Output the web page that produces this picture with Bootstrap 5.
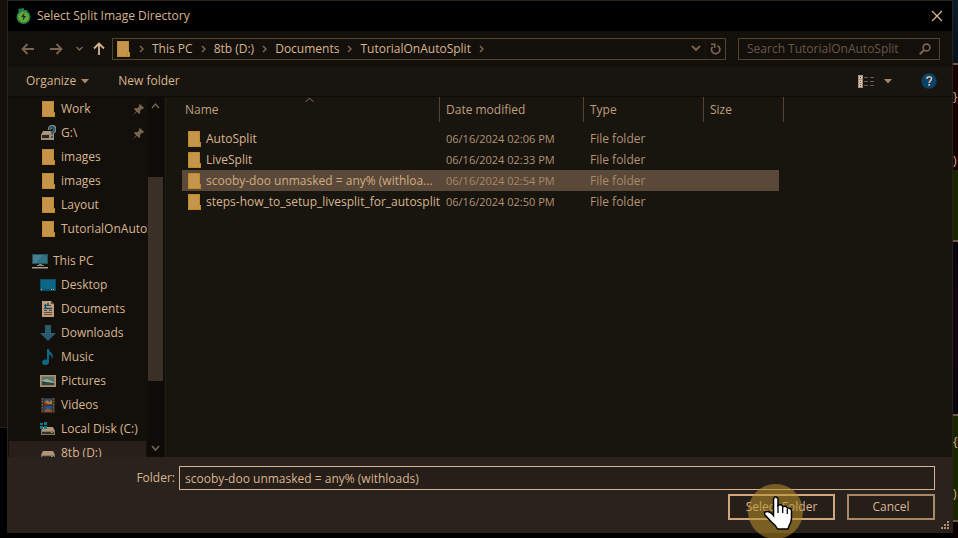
<!DOCTYPE html>
<html lang="en">
<head>
<meta charset="utf-8">
<meta name="viewport" content="width=device-width, initial-scale=1">
<title>Select Split Image Directory</title>
<link href="https://cdn.jsdelivr.net/npm/bootstrap@5.3.0/dist/css/bootstrap.min.css" rel="stylesheet">
<style>
:root { --ink:#d9b48e; --dim:#7b6450; --line:#54432f; }
body { font:12px/16px "Open Sans","Noto Sans",sans-serif; color:var(--ink); background:#000; height:100vh; }
a, a:hover { color:inherit; text-decoration:none; }
svg { display:block; flex:none; }
.bare { background:none; border:0; padding:0; color:inherit; font:inherit; }
.desk-left { width:7px; }
.desk-left div:first-child { flex:427; background:#14110c; border-bottom:1px solid #2a2019; }
.desk-left div:last-child { flex:110; }
.desk-right { width:5px; }
.desk-right div { overflow:hidden; border-bottom:2px solid #6b5a48; }
.dialog { min-width:0; border:1px solid #2b221b; margin-bottom:5px; background:#13100c; }
.titlebar { height:30px; background:#000; padding:0 9px 0 8px; gap:6px; }
.navrow { height:35px; padding:0 12px 0 13px; }
.recent { margin-left:13px; }
.up { margin-left:10px; }
.field { height:22px; border:1px solid var(--line); background:#13100c; }
.location { margin:0 12px 0 7px; }
.search { width:202px; }
.search input { background:none; border:0; outline:0; color:var(--ink); font:inherit; padding:0; min-width:0; }
.search input::placeholder { color:#6a5644; opacity:1; }
.refresh { border-left:1px solid #1e1813; width:20px; height:20px; }
.crumb { margin:0 8px; }
.toolrow { height:31px; background:#18140f; border-bottom:1px solid #0e0b08; padding:0 15px 0 18px; }
.side { width:140px; overflow:hidden; }
.side a { height:24px; flex:none; padding-left:32px; gap:4px; white-space:nowrap; }
.side a.top { padding-left:24px; margin-top:8px; }
.side a.current { background:#281f1a; margin-right:2px; margin-left:1px; padding-left:31px; }
.side .icon-box { width:17px; flex:none; }
.side .fold { padding-left:2px; }
.side .pin { margin-left:auto; margin-right:3px; }
.scroll { width:16px; background:#0e0b09; padding-right:1px; }
.thumb { background:#3a3027; flex:208; }
.files { background:#18150f; border-left:1px solid #221c16; margin-left:1px; padding-left:16px; }
.files table { width:602px; table-layout:fixed; border-collapse:separate; border-spacing:0; }
.files th { height:25px; font-weight:400; padding:0 6px; border-right:1px solid var(--line); color:#bf9d7c; position:relative; }
.files th:first-child { padding-left:3px; }
.files th svg { position:absolute; left:50%; top:0; margin-left:-6px; }
.files td { height:21px; padding:0 6px; white-space:nowrap; color:#b39273; }
.files td:first-child { padding-right:0; color:var(--ink); }
.files td:last-child { border-right:5px solid transparent; background-clip:padding-box; }
.files .stamp { font-size:11px; }
.files .spacer td { height:6px; }
.files .picked td { background-color:#5a4938; color:#a98769; }
.files .picked td:first-child { color:#d0ab84; }
.footer-pane { height:75px; background:#2a221d; padding:9px 17px 0 20px; }
.footer-pane input { height:24px; border:1px solid var(--ink); background:#251e19; color:var(--ink); font:inherit; padding:0 5px; outline:0; min-width:0; }
.footer-pane label { width:147px; }
.choice { height:26px; border:2px solid #a98769; background:#251e19; color:var(--ink); font:inherit; padding:0; }
.choice.wide { width:107px; border-color:#d0a67e; }
.choice.narrow { width:88px; }
.halo { position:absolute; left:20px; top:-10px; width:55px; height:55px; border-radius:50%; background:rgba(190,148,45,.54); pointer-events:none; }
.hand { position:absolute; left:35px; top:2px; pointer-events:none; }
.grip { position:absolute; right:3px; bottom:3px; }
</style>
<script src="https://cdn.jsdelivr.net/npm/bootstrap@5.3.0/dist/js/bootstrap.bundle.min.js"></script>
</head>
<body class="d-flex overflow-hidden">
<svg width="0" height="0" class="position-absolute" aria-hidden="true">
  <defs>
    <symbol id="folder" viewBox="0 0 14 16"><path d="M0 0h12v11h1v5H0z" fill="#c08a28"/><path d="M1 1h10v10l-1 1v3H1z" fill="#c5954e"/><path d="M11 12h1v3h-1z" fill="#d5a04a"/></symbol>
    <symbol id="sep" viewBox="0 0 5 8"><path d="M1 1l3 3-3 3" fill="none" stroke="#7b6450" stroke-width="1.5"/></symbol>
    <symbol id="pin" viewBox="0 0 12 12"><path d="M7 1l4 4-1 1-1-.3-2 2 .2 2.300L6 11 3.800 8.800.8 11.500.5 11.200 3.200 8.200 1 6l1-1 2.300.2 2-2L6 2z" fill="#7b6450"/></symbol>
    <symbol id="drive" viewBox="0 0 16 16"><path d="M3 6h10l2 4H1z" fill="#b09478"/><path d="M1 10h14v4H1z" fill="#8d7763"/><path d="M2 11h12v2H2z" fill="#3a332b"/><path d="M11 11h2v1h-2z" fill="#5fa06a"/></symbol>
  </defs>
</svg>

<div class="desk-left d-flex flex-column"><div></div><div></div></div>

<main class="dialog d-flex flex-column flex-fill position-relative">
  <header class="titlebar d-flex align-items-center flex-shrink-0">
    <svg width="15" height="16" viewBox="0 0 15 16"><path d="M2 1l6-1v2h3l1 2H3z" fill="#1f7f48"/><circle cx="7.500" cy="9" r="6.200" fill="#6aa63a" stroke="#1f7f48" stroke-width="1.500"/><path d="M8.500 4.500L5 9h2.300L6.500 13l3.700-5H8z" fill="#0c3a22"/></svg>
    <span>Select Split Image Directory</span>
    <button class="bare ms-auto" aria-label="Close"><svg width="12" height="12" viewBox="0 0 12 12"><path d="M1 1l10 10M11 1L1 11" stroke="#e0bb95" stroke-width="1.200"/></svg></button>
  </header>

  <nav class="navrow d-flex align-items-center flex-shrink-0" aria-label="Location">
    <button class="bare" aria-label="Back"><svg width="13" height="12" viewBox="0 0 13 12"><path d="M13 6H1.500M6.500 1l-5 5 5 5" fill="none" stroke="#7b6450" stroke-width="1.800"/></svg></button>
    <button class="bare ms-3" aria-label="Forward"><svg width="13" height="12" viewBox="0 0 13 12"><path d="M0 6h11.500M6.500 1l5 5-5 5" fill="none" stroke="#7b6450" stroke-width="1.800"/></svg></button>
    <button class="bare recent" aria-label="Recent locations"><svg width="7" height="6" viewBox="0 0 7 6"><path d="M.5 1l3 3 3-3" fill="none" stroke="#7b6450" stroke-width="1.500"/></svg></button>
    <button class="bare up" aria-label="Up"><svg width="12" height="13" viewBox="0 0 12 13"><path d="M6 13V1.500M1 6.500l5-5 5 5" fill="none" stroke="#d9b48e" stroke-width="1.800"/></svg></button>
    <div class="field location flex-fill d-flex align-items-center ps-1">
      <svg width="14" height="16"><use href="#folder"/></svg>
      <svg class="crumb" width="5" height="8"><use href="#sep"/></svg>
      <a href="#">This PC</a><svg class="crumb" width="5" height="8"><use href="#sep"/></svg>
      <a href="#">8tb (D:)</a><svg class="crumb" width="5" height="8"><use href="#sep"/></svg>
      <a href="#">Documents</a><svg class="crumb" width="5" height="8"><use href="#sep"/></svg>
      <a href="#">TutorialOnAutoSplit</a><svg class="crumb" width="5" height="8"><use href="#sep"/></svg>
      <button class="bare ms-auto" aria-label="Previous locations"><svg width="10" height="7" viewBox="0 0 10 7"><path d="M1 1l4 4 4-4" fill="none" stroke="#7b6450" stroke-width="1.800"/></svg></button>
      <button class="bare refresh d-flex align-items-center justify-content-center ms-1" aria-label="Refresh"><svg width="11" height="12" viewBox="0 0 11 12"><path d="M7.500 2.700A4.200 4.200 0 1 1 2.500 3.700" fill="none" stroke="#7b6450" stroke-width="1.700"/><path d="M1 1.300h3.700V5" fill="none" stroke="#7b6450" stroke-width="1.600"/></svg></button>
    </div>
    <div class="field search d-flex align-items-center ps-2 pe-2">
      <input class="flex-fill" type="text" aria-label="Search" placeholder="Search TutorialOnAutoSplit">
      <svg width="12" height="12" viewBox="0 0 12 12"><circle cx="7.500" cy="4.500" r="3.400" fill="none" stroke="#7b6450" stroke-width="1.600"/><path d="M5 7L.8 11.200" stroke="#7b6450" stroke-width="2"/></svg>
    </div>
  </nav>

  <div class="toolrow d-flex align-items-center flex-shrink-0">
    <button class="bare d-flex align-items-center">Organize <svg class="ms-1" width="10" height="5" viewBox="0 0 10 5"><path d="M1 0h8L5 4.500z" fill="#a98769"/></svg></button>
    <button class="bare ms-4 ps-1">New folder</button>
    <button class="bare ms-auto d-flex align-items-center gap-2" aria-label="Change view">
      <svg width="17" height="13" viewBox="0 0 17 13"><path d="M0 0h5v13H0z" fill="#a98f76"/><path d="M1 1h3v3H1zM1 5h3v3H1zM1 9h3v3H1z" fill="#d9c4ac"/><path d="M2 2h1v1H2z" fill="#333"/><path d="M2 6h1v1H2z" fill="#0a6a98"/><path d="M2 10h1v1H2z" fill="#a02018"/><path d="M6 2.500h4m2 0h4M6 6.500h4m2 0h4M6 10.500h4m2 0h4" stroke="#6e5a48"/></svg>
      <svg width="10" height="5" viewBox="0 0 10 5"><path d="M1 0h8L5 4.500z" fill="#a98769"/></svg>
    </button>
    <button class="bare ms-4 ps-1" aria-label="Help"><svg width="16" height="16" viewBox="0 0 16 16"><circle cx="8" cy="8" r="7.700" fill="#06436a"/><path d="M5.800 6c0-3 4.700-3 4.700-.2C10.500 7.600 8.200 7.600 8.200 10" fill="none" stroke="#e0bb95" stroke-width="1.600"/><path d="M7.300 11h1.800v1.800H7.300z" fill="#e0bb95"/></svg></button>
  </div>

  <div class="d-flex flex-fill overflow-hidden">
    <nav class="side d-flex flex-column flex-shrink-0" aria-label="Folders">
      <a href="#" class="d-flex align-items-center"><span class="icon-box fold"><svg width="14" height="16"><use href="#folder"/></svg></span>Work<svg class="pin" width="12" height="12"><use href="#pin"/></svg></a>
      <a href="#" class="d-flex align-items-center"><span class="icon-box"><svg width="16" height="16" viewBox="0 0 16 16"><path d="M3 6h8v4H1z" fill="#b09478"/><path d="M1 9h13v6H1z" fill="#a08a74"/><path d="M2 10h7v3H2z" fill="#2d2721"/><path d="M9.500 5c0-4.500 5.500-4.500 5.500-.5 0 2.500-3 2-3 5m0 1.500v3" fill="none" stroke="#b09478" stroke-width="3.200"/><path d="M9.500 5c0-4.500 5-4 5-.5 0 2.500-2.500 2-2.500 5m0 1.500v2" fill="none" stroke="#135a80" stroke-width="1.800"/></svg></span>G:\<svg class="pin" width="12" height="12"><use href="#pin"/></svg></a>
      <a href="#" class="d-flex align-items-center"><span class="icon-box fold"><svg width="14" height="16"><use href="#folder"/></svg></span>images</a>
      <a href="#" class="d-flex align-items-center"><span class="icon-box fold"><svg width="14" height="16"><use href="#folder"/></svg></span>images</a>
      <a href="#" class="d-flex align-items-center"><span class="icon-box fold"><svg width="14" height="16"><use href="#folder"/></svg></span>Layout</a>
      <a href="#" class="d-flex align-items-center"><span class="icon-box fold"><svg width="14" height="16"><use href="#folder"/></svg></span>TutorialOnAutoSplit</a>
      <a href="#" class="top d-flex align-items-center"><span class="icon-box"><svg width="17" height="16" viewBox="0 0 17 16"><path d="M0 1h16v10H0z" fill="#24505c"/><path d="M1 2h14v8H1z" fill="#2f7284"/><path d="M1 2h10L4 10H1z" fill="#47808c"/><path d="M7 11h3v1h2v1H5v-1h2z" fill="#8d8273"/><path d="M0 14h16v1.500H0z" fill="#a89a88"/></svg></span>This PC</a>
      <a href="#" class="d-flex align-items-center"><span class="icon-box"><svg width="16" height="12" viewBox="0 0 16 12"><path d="M0 0h16v12H0z" fill="#0c4f6b"/><path d="M1 1h14v9H1z" fill="#0d6886"/><path d="M1 10h1v1H1zM11 10h1v1h-1zM13 10h1v1h-1z" fill="#c8b090"/></svg></span>Desktop</a>
      <a href="#" class="d-flex align-items-center"><span class="icon-box"><svg width="16" height="16" viewBox="0 0 16 16"><path d="M2 0h9l3 3v13H2z" fill="#c09c7a"/><path d="M11 0v3h3z" fill="#5a4938"/><path d="M4 4.500h7M4 9.500h3M9 9.500h3M4 11.500h8M4 13.500h8" stroke="#5f4e3e"/><path d="M4 7.500h8M5.500 3v5M8 2v3" stroke="#0b4f74" stroke-width="1.500"/></svg></span>Documents</a>
      <a href="#" class="d-flex align-items-center"><span class="icon-box"><svg width="16" height="16" viewBox="0 0 16 16"><path d="M5 0h6v8h5l-8 8-8-8h5z" fill="#285a72"/></svg></span>Downloads</a>
      <a href="#" class="d-flex align-items-center"><span class="icon-box"><svg width="16" height="16" viewBox="0 0 16 16"><path d="M7 0h2c0 3 4 4 3.800 7.500-.1 1.800-1 2.500-1.300 2.500.8-2.500-.5-3.800-2.500-4.500V13c0 4-7 4-7 .5 0-2.500 3-3.500 5-2.500z" fill="#0d6886"/></svg></span>Music</a>
      <a href="#" class="d-flex align-items-center"><span class="icon-box"><svg width="16" height="12" viewBox="0 0 16 12"><path d="M0 0h16v12H0z" fill="#b98f6b"/><path d="M1.500 1.500h13v9h-13z" fill="#4f7672"/><path d="M2 5l5-1 7 3v1H2z" fill="#a6a68c"/><path d="M2 6l4 1 8 1v2H2z" fill="#27483d"/></svg></span>Pictures</a>
      <a href="#" class="d-flex align-items-center"><span class="icon-box"><svg width="16" height="15" viewBox="0 0 16 15"><path d="M1 0h14v15H1z" fill="#3a2e25"/><path d="M2.500 0v15M13.500 0v15" stroke="#7b6450" stroke-dasharray="1.500 1.500"/><path d="M4 1h8v6H4zM4 8h8v6H4z" fill="#27507a"/><path d="M5 4l2-2 2 2 3-2v4H5z" fill="#b0782c"/><path d="M4 5h3v2H4z" fill="#8e2c20"/><path d="M5 12l3-2 4 3v1H5z" fill="#93502c"/></svg></span>Videos</a>
      <a href="#" class="d-flex align-items-center"><span class="icon-box"><svg width="16" height="16" viewBox="0 0 16 16"><use href="#drive"/><path d="M0 2h3v2H0zM4 1h3v3H4zM0 5h3v3H0zM4 5h3v3H4z" fill="#087c8a"/></svg></span>Local Disk (C:)</a>
      <a href="#" class="current d-flex align-items-center" aria-current="true"><span class="icon-box"><svg width="16" height="16"><use href="#drive"/></svg></span>8tb (D:)</a>
    </nav>
    <div class="scroll d-flex flex-column align-items-stretch flex-shrink-0">
      <div style="flex:78" class="pt-1 d-flex justify-content-center"><svg width="9" height="9" viewBox="0 0 9 9"><path d="M1 7l3.500-4L8 7" fill="none" stroke="#7b6450" stroke-width="1.300"/></svg></div>
      <div class="thumb"></div>
      <div style="flex:74" class="pb-1 d-flex justify-content-center align-items-end"><svg width="9" height="9" viewBox="0 0 9 9"><path d="M1 2l3.500 4L8 2" fill="none" stroke="#7b6450" stroke-width="1.500"/></svg></div>
    </div>
    <section class="files flex-fill">
      <table>
        <colgroup><col style="width:258px"><col style="width:144px"><col style="width:120px"><col style="width:80px"></colgroup>
        <thead><tr><th scope="col">Name<svg width="9" height="6" viewBox="0 0 9 6"><path d="M.5 5l4-4 4 4" fill="none" stroke="#8d7259"/></svg></th><th scope="col">Date modified</th><th scope="col">Type</th><th scope="col">Size</th></tr></thead>
        <tbody>
          <tr class="spacer" aria-hidden="true"><td colspan="4" class="p-0"></td></tr>
          <tr><td><div class="d-flex align-items-center gap-1"><svg width="14" height="16"><use href="#folder"/></svg>AutoSplit</div></td><td class="stamp">06/16/2024 02:06 PM</td><td>File folder</td><td></td></tr>
          <tr><td><div class="d-flex align-items-center gap-1"><svg width="14" height="16"><use href="#folder"/></svg>LiveSplit</div></td><td class="stamp">06/16/2024 02:33 PM</td><td>File folder</td><td></td></tr>
          <tr class="picked"><td><div class="d-flex align-items-center gap-1"><svg width="14" height="16"><use href="#folder"/></svg>scooby-doo unmasked = any% (withloa...</div></td><td class="stamp">06/16/2024 02:54 PM</td><td>File folder</td><td></td></tr>
          <tr><td><div class="d-flex align-items-center gap-1"><svg width="14" height="16"><use href="#folder"/></svg>steps-how_to_setup_livesplit_for_autosplit</div></td><td class="stamp">06/16/2024 02:50 PM</td><td>File folder</td><td></td></tr>
        </tbody>
      </table>
    </section>
  </div>

  <form class="footer-pane flex-shrink-0">
    <div class="d-flex align-items-center">
      <label for="folder-name" class="text-end me-1">Folder:</label>
      <input id="folder-name" class="flex-fill" type="text" value="scooby-doo unmasked = any% (withloads)">
    </div>
    <div class="d-flex justify-content-end pt-1">
      <div class="position-relative me-2 pe-1">
        <button type="button" class="choice wide">Select Folder</button>
        <span class="halo"></span>
        <svg class="hand" width="30" height="35" viewBox="0 0 30 35"><path d="M10.500 3q2.200-4.500 4.500 0V9.500q3-2 5 1 3-1 4.500 1.500 3.500-.5 4 2.500V22q0 4-2.500 8l-1 3H14.500q-2-4-6-7L2 19q-1.500-3.500 2-3.500 3.500 0 6.500 4z" fill="#fff" stroke="#000" stroke-width="1.500"/><path d="M15 9v8M19.700 11v6M24.300 13v5" stroke="#000" stroke-width="1.300"/></svg>
      </div>
      <button type="button" class="choice narrow">Cancel</button>
    </div>
    <svg class="grip" width="8" height="8" viewBox="0 0 8 8"><path d="M6 0h2v2H6zM3 3h2v2H3zM6 3h2v2H6zM0 6h2v2H0zM3 6h2v2H3zM6 6h2v2H6z" fill="#a98f76"/></svg>
  </form>
</main>

<aside class="desk-right d-flex flex-column" aria-hidden="true">
  <div style="flex:64;background:linear-gradient(#0a1d2a,#06101a)"></div>
  <div style="flex:178;background:linear-gradient(#160000 60%,#182500 60%)" class="d-flex flex-column justify-content-around"><span>}</span><span>)</span><span></span></div>
  <div style="flex:174;background:linear-gradient(#08060c,#140610,#08060c)"></div>
  <div style="flex:106;background:#182500" class="d-flex flex-column justify-content-around"><span>{</span><span>)</span></div>
  <div style="flex:16;background:#0e0000" class="border-0"></div>
</aside>
</body>
</html>
